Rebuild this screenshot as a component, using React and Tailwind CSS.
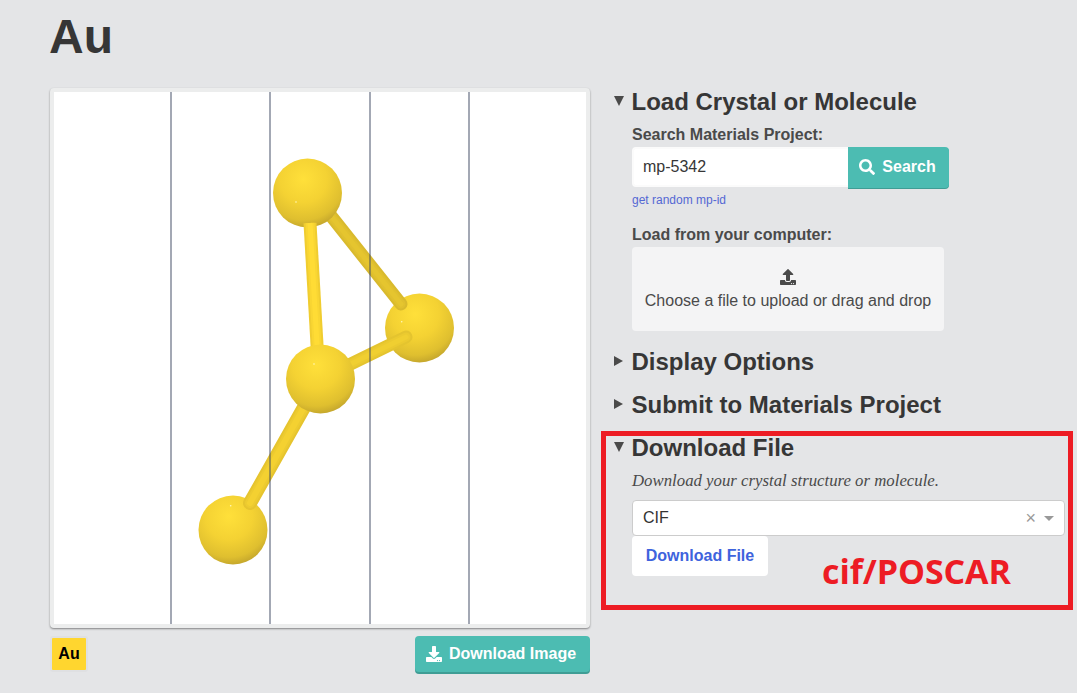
import React from "react";
import { FaSearch, FaUpload, FaDownload } from "react-icons/fa";

function Sphere({ cx, cy, hx, hy }) {
  return (
    <g>
      <circle cx={cx} cy={cy} r="34.5" fill="url(#gold)" />
      <circle cx={hx} cy={hy} r="0.8" fill="#fff8c0" />
    </g>
  );
}

function Bond({ x1, y1, x2, y2, edge, mid, core, cap = "round", width = 13 }) {
  return (
    <g strokeLinecap={cap}>
      <line x1={x1} y1={y1} x2={x2} y2={y2} stroke={edge} strokeWidth={width} />
      <line x1={x1} y1={y1} x2={x2} y2={y2} stroke={mid} strokeWidth={width - 4} />
      <line x1={x1} y1={y1} x2={x2} y2={y2} stroke={core} strokeWidth={width - 8} />
    </g>
  );
}

function Structure() {
  return (
    <svg width="532" height="532" viewBox="0 0 532 532" className="block">
      <defs>
        <radialGradient id="gold" cx="0.44" cy="0.3" r="0.76">
          <stop offset="0" stopColor="#ffe03a" />
          <stop offset="0.45" stopColor="#f4d233" />
          <stop offset="0.78" stopColor="#dfbf2f" />
          <stop offset="1" stopColor="#b99c2b" />
        </radialGradient>
      </defs>
      <Sphere cx={365.5} cy={236} hx={347.7} hy={229.7} />
      <Bond x1={262} y1={105} x2={347} y2={212} edge="#d9ba2d" mid="#e0c02e" core="#e5c52f" />
      <Bond x1={266} y1={287} x2={352} y2={245} edge="#e4c42f" mid="#ebca30" core="#f0cf31" />
      <Sphere cx={253.5} cy={101} hx={242} hy={110} />
      <Bond x1={256} y1={131} x2={264} y2={270} edge="#f0cd30" mid="#f9d633" core="#ffdc35" cap="butt" />
      <Sphere cx={179} cy={438} hx={176.7} hy={413.7} />
      <Bond x1={266} y1={287} x2={196} y2={411} edge="#e6c42e" mid="#edcb30" core="#f4d131" width={14} />
      <Sphere cx={266.5} cy={287} hx={260} hy={272} />
      <line x1="117" y1="0" x2="117" y2="532" stroke="#3f4a63" strokeOpacity="0.48" strokeWidth="2" />
      <line x1="216" y1="0" x2="216" y2="532" stroke="#3f4a63" strokeOpacity="0.48" strokeWidth="2" />
      <line x1="316" y1="0" x2="316" y2="532" stroke="#3f4a63" strokeOpacity="0.48" strokeWidth="2" />
      <line x1="415" y1="0" x2="415" y2="532" stroke="#3f4a63" strokeOpacity="0.48" strokeWidth="2" />
    </svg>
  );
}

function Triangle({ open }) {
  return open ? (
    <span className="w-0 h-0 border-x-[5.5px] border-x-transparent border-t-[10px] border-t-[#4a4a4a] mt-[-3px]" />
  ) : (
    <span className="w-0 h-0 border-y-[5px] border-y-transparent border-l-[9px] border-l-[#4a4a4a] mt-[-3px]" />
  );
}

function Section({ title, open, children, className }) {
  return (
    <div className={className}>
      <div className="flex items-center h-[28px]">
        <span className="w-[17.5px] flex items-center">
          <Triangle open={open} />
        </span>
        <h2 className="text-[24px] leading-[28px] font-bold text-[#363636]">{title}</h2>
      </div>
      {children}
    </div>
  );
}

export default function App() {
  return (
    <div className="relative h-[693px] w-[1077px] overflow-hidden bg-[#e4e5e7] font-['Liberation_Sans',Arial,sans-serif] text-[#4a4a4a]">
      <h1 className="pl-[49px] pt-[11px] text-[48px] leading-[52px] font-bold text-[#363636]">Au</h1>

      <div className="flex pl-[50px] pt-[25px]">
        <div className="w-[540px]">
          <div className="rounded-[4px] border-4 border-[#eceded] bg-white shadow-[0_1px_2px_rgba(10,10,10,0.45)]">
            <Structure />
          </div>
          <div className="flex items-start justify-between pt-[8px]">
            <div className="rounded-[3px] border-2 border-[#dfe0e2] bg-[#ffd62f] w-[38px] h-[36px] flex items-center justify-center text-[16px] font-bold text-black">
              Au
            </div>
            <button className="flex h-[36px] w-[175px] items-center justify-center gap-[7px] rounded-[4px] bg-[#4cbcb2] pr-[3px] pb-[1px] text-[16px] font-bold text-white shadow-[0_2px_0_#3f9d95]">
              <FaDownload className="text-[16px]" />
              Download Image
            </button>
          </div>
        </div>

        <div className="ml-[24px] flex-1">
          <Section title="Load Crystal or Molecule" open>
            <div className="pl-[18px] pt-[9px]">
              <label className="block text-[16px] leading-[20px] font-bold">Search Materials Project:</label>
              <div className="mt-[2px] flex items-start">
                <input
                  readOnly
                  value="mp-5342"
                  className="h-[40px] w-[216px] rounded-l-[4px] border-y-2 border-l-2 border-[#fbfbfb] bg-white px-[9px] text-[16px] text-[#363636] outline-none"
                />
                <button className="flex h-[41px] w-[101px] items-center justify-center gap-[7px] rounded-r-[4px] bg-[#4cbcb2] pr-[2px] pb-[2px] text-[16px] font-bold text-white shadow-[0_1px_0_#3f9d95]">
                  <FaSearch className="text-[16px]" />
                  Search
                </button>
              </div>
              <a className="mt-[5px] block text-[12px] leading-[14px] text-[#5468d4]">get random mp-id</a>
              <label className="mt-[18px] block text-[16px] leading-[20px] font-bold">Load from your computer:</label>
              <div className="mt-[2px] flex h-[84px] w-[312px] flex-col items-center justify-center rounded-[4px] bg-[#f4f4f5]">
                <FaUpload className="text-[16px] mt-[3px]" />
                <span className="mt-[5px] text-[16px] leading-[22px]">Choose a file to upload or drag and drop</span>
              </div>
            </div>
          </Section>

          <Section title="Display Options" className="mt-[17px]" />
          <Section title="Submit to Materials Project" className="mt-[15px]" />

          <Section title="Download File" open className="mt-[15px]">
            <div className="pl-[18px]">
              <p className="pt-[8px] font-['Liberation_Serif',serif] text-[16.8px] leading-[22px] italic">
                Download your crystal structure or molecule.
              </p>
              <div className="mt-[8px] flex h-[36px] w-[433px] items-center rounded-[4px] border border-[#cccccc] bg-white pl-[10px] pr-[10px] text-[16px] text-[#333333]">
                <span className="flex-1">CIF</span>
                <span className="text-[18px] leading-none text-[#999999]">×</span>
                <span className="ml-[8px] h-0 w-0 border-x-[5px] border-t-[5px] border-x-transparent border-t-[#999999]" />
              </div>
              <button className="block h-[40px] w-[136px] rounded-[4px] bg-white text-[16px] font-bold text-[#3e63dd]">
                Download File
              </button>
            </div>
          </Section>
        </div>
      </div>

      {/* annotation drawn over the screenshot */}
      <div className="absolute left-[601px] top-[431px] h-[179px] w-[472px] border-[5px] border-[#ed1c24]" />
      <span className="absolute left-[822px] top-[548px] font-['Open_Sans',sans-serif] text-[34px] leading-[46px] font-bold tracking-[-0.1px] text-[#ed1c24]">
        cif/POSCAR
      </span>
    </div>
  );
}
